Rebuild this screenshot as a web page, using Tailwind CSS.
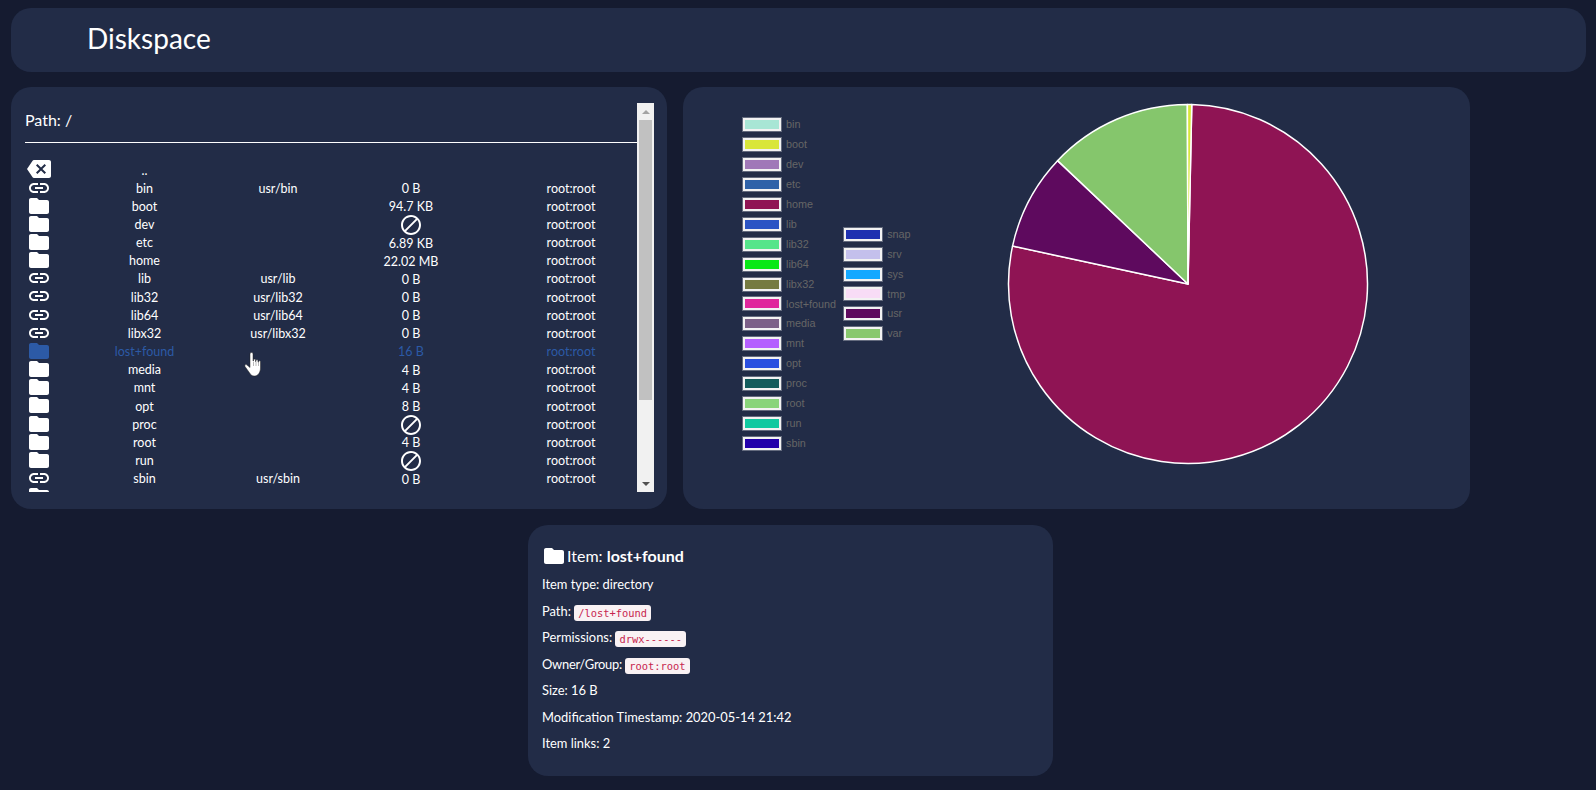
<!DOCTYPE html>
<html lang="en">
<head>
  <meta charset="UTF-8" />
  <title>Diskspace</title>
  <script src="https://cdn.jsdelivr.net/npm/@tailwindcss/browser@4"></script>
</head>
<body class="bg-[#151b30] text-white font-['Lato',sans-serif] overflow-hidden h-[790px]">
  <svg class="hidden">
    <symbol id="folder" viewBox="0 0 24 24"><path fill="currentColor" d="M10 4H4c-1.1 0-1.99.9-1.99 2L2 18c0 1.1.9 2 2 2h16c1.1 0 2-.9 2-2V8c0-1.1-.9-2-2-2h-8l-2-2z"/></symbol>
    <symbol id="link" viewBox="0 0 24 24"><path fill="currentColor" d="M3.9 12c0-1.71 1.39-3.1 3.1-3.1h4V7H7c-2.76 0-5 2.24-5 5s2.24 5 5 5h4v-1.9H7c-1.71 0-3.1-1.39-3.1-3.1zM8 13h8v-2H8v2zm9-6h-4v1.9h4c1.71 0 3.1 1.39 3.1 3.1s-1.39 3.1-3.1 3.1h-4V17h4c2.76 0 5-2.24 5-5s-2.24-5-5-5z"/></symbol>
    <symbol id="back" viewBox="0 0 24 24"><path fill="currentColor" d="M22 3H7c-.69 0-1.23.35-1.59.88L0 12l5.41 8.11c.36.53.9.89 1.59.89h15c1.1 0 2-.9 2-2V5c0-1.1-.9-2-2-2zm-3 12.59L17.59 17 14 13.41 10.41 17 9 15.59 12.59 12 9 8.41 10.41 7 14 10.59 17.59 7 19 8.41 15.41 12 19 15.59z"/></symbol>
    <symbol id="block" viewBox="0 0 24 24"><path fill="currentColor" d="M12 2C6.48 2 2 6.48 2 12s4.48 10 10 10 10-4.48 10-10S17.52 2 12 2zM4 12c0-4.42 3.58-8 8-8 1.85 0 3.55.63 4.9 1.69L5.69 16.9C4.63 15.55 4 13.85 4 12zm8 8c-1.85 0-3.55-.63-4.9-1.69L18.31 7.1C19.37 8.45 20 10.15 20 12c0 4.42-3.58 8-8 8z"/></symbol>
  </svg>

  <div class="pt-2 pl-[11px] pr-[10px]">
    <header class="h-16 rounded-[20px] bg-[#222c47] pl-[76px] pb-1 flex items-center">
      <h1 class="text-[28px] leading-none">Diskspace</h1>
    </header>

    <div class="mt-[15px] flex gap-4 items-start">
      <!-- file list -->
      <section class="relative w-[656px] h-[422px] rounded-[20px] bg-[#222c47] pt-4 pl-[14px] pr-[13px] flex">
        <div class="w-[612px] h-[389px] overflow-hidden">
          <div class="h-[40px] border-b border-white pb-[6px] flex items-center text-[16px]">Path: /</div>
          <div id="rows" class="pt-[18.5px] text-[12.5px]"></div>
        </div>
        <div class="w-[17px] h-[389px] bg-[#f1f1f1] flex flex-col items-center">
          <div class="h-[17px] flex items-center justify-center"><div class="w-0 h-0 border-x-[4px] border-x-transparent border-b-[4px] border-b-[#a3a3a3]"></div></div>
          <div class="w-[13px] h-[280px] bg-[#c1c1c1]"></div>
          <div class="mt-auto h-[17px] flex items-center justify-center"><div class="w-0 h-0 border-x-[4px] border-x-transparent border-t-[4px] border-t-[#505050]"></div></div>
        </div>
        <!-- mouse pointer -->
        <svg class="absolute left-[233px] top-[265px]" width="20" height="25" viewBox="0 0 20 25"><path fill="#fff" stroke="#222" stroke-width=".5" d="M7.500.5c1 0 1.500.7 1.500 1.700V9h.5V8c0-1.200 2-1.200 2 0v1.500h.5v-.8c0-1.200 2-1.200 2 0v1.500h.5v-.5c0-1.200 2-1.200 2 0V16c0 4-2.500 8-5.500 8H10c-2 0-3-1-4-2.500L1 14.500c-.8-1.500 1-2.500 2-1.500l3 2.500V2.200C6 1.200 6.500.5 7.500.5z"/><path stroke="#8a8a8a" stroke-width=".6" d="M9.500 10v4M12 10v4M14.500 10.500v3.500"/></svg>
      </section>

      <!-- chart -->
      <section class="w-[787px] h-[422px] rounded-[20px] bg-[#222c47] flex">
        <div class="ml-[60px] mt-[28px] h-[338px] flex items-center gap-[8px] text-[10.8px] leading-none text-[#666] font-['Liberation_Sans',sans-serif]">
          <ul id="legend1"></ul>
          <ul id="legend2"></ul>
        </div>
        <svg class="ml-auto mr-[94.5px] mt-[9px]" width="376" height="376" viewBox="-188 -188 376 376">
          <g stroke="#fff" stroke-width="1.5" stroke-linejoin="round">
            <path id="s-home" fill="#8f1454" d=""/>
            <path id="s-usr" fill="#5e0a5e" d=""/>
            <path id="s-var" fill="#85c66c" d=""/>
            <path id="s-boot" fill="#d9e639" d=""/>
          </g>
        </svg>
      </section>
    </div>

    <!-- item details -->
    <section class="mt-4 ml-[517px] w-[525px] h-[251px] rounded-[20px] bg-[#222c47] pt-[19px] pl-[14px] text-[12.9px] leading-[21px]">
      <h2 class="flex items-center text-[16px] h-6 leading-none">
        <svg class="w-6 h-6 mr-[1px]"><use href="#folder"/></svg>
        <span>Item: <b>lost+found</b></span>
      </h2>
      <p class="mt-[6px] h-[21px]">Item type: directory</p>
      <p class="mt-[5.5px] h-[21px]">Path: <code class="inline-block h-4 leading-4 align-[-1px] px-1 rounded-[3px] bg-[#f9f2f4] text-[#c7254e] text-[10.4px] font-['DejaVu_Sans_Mono',monospace]">/lost+found</code></p>
      <p class="mt-[5.5px] h-[21px]">Permissions: <code class="inline-block h-4 leading-4 align-[-1px] px-1 rounded-[3px] bg-[#f9f2f4] text-[#c7254e] text-[10.4px] font-['DejaVu_Sans_Mono',monospace]">drwx------</code></p>
      <p class="mt-[5.5px] h-[21px]"><span class="tracking-[-0.25px]">Owner/Group:</span> <code class="inline-block h-4 leading-4 align-[-1px] px-1 rounded-[3px] bg-[#f9f2f4] text-[#c7254e] text-[10.4px] font-['DejaVu_Sans_Mono',monospace]">root:root</code></p>
      <p class="mt-[5.7px] h-[21px]">Size: 16 B</p>
      <p class="mt-[5.5px] h-[21px]">Modification Timestamp: 2020-05-14 21:42</p>
      <p class="mt-[5.7px] h-[21px]">Item links: 2</p>
    </section>
  </div>

  <script>
    // name, link target, size, icon
    const items = [
      ["..", "", "", "back"],
      ["bin", "usr/bin", "0 B", "link"],
      ["boot", "", "94.7 KB", "folder"],
      ["dev", "", null, "folder"],
      ["etc", "", "6.89 KB", "folder"],
      ["home", "", "22.02 MB", "folder"],
      ["lib", "usr/lib", "0 B", "link"],
      ["lib32", "usr/lib32", "0 B", "link"],
      ["lib64", "usr/lib64", "0 B", "link"],
      ["libx32", "usr/libx32", "0 B", "link"],
      ["lost+found", "", "16 B", "folder"],
      ["media", "", "4 B", "folder"],
      ["mnt", "", "4 B", "folder"],
      ["opt", "", "8 B", "folder"],
      ["proc", "", null, "folder"],
      ["root", "", "4 B", "folder"],
      ["run", "", null, "folder"],
      ["sbin", "usr/sbin", "0 B", "link"],
      ["snap", "", "24 B", "folder"],
    ];

    document.getElementById("rows").innerHTML = items.map(([name, link, size, icon]) => {
      const active = name === "lost+found";
      const owner = name === ".." ? "" : "root:root";
      const sizeCell = size === null
        ? '<svg class="w-6 h-6 mx-auto -my-[3px]"><use href="#block"/></svg>'
        : size;
      return `<div class="grid grid-cols-[25px_189px_78px_188px_132px] h-[18.16px] items-center text-center ${active ? "text-[#2c5aa6]" : ""}">
        <div class="h-[18px] ml-[2px] -mt-[3px] flex items-center"><svg class="w-6 h-6 shrink-0"><use href="#${icon}"/></svg></div>
        <div>${name}</div><div>${link}</div><div class="h-[18px] leading-[18px]">${sizeCell}</div><div>${owner}</div>
      </div>`;
    }).join("");

    const legend = [
      ["bin", "#a8e6d5"], ["boot", "#d9e639"], ["dev", "#a078b8"], ["etc", "#2f62a8"], ["home", "#8f1454"],
      ["lib", "#2b54c4"], ["lib32", "#55e58a"], ["lib64", "#08e816"], ["libx32", "#757a40"], ["lost+found", "#e0269c"],
      ["media", "#7c6088"], ["mnt", "#b45fff"], ["opt", "#2a4fe0"], ["proc", "#135c5c"], ["root", "#88d47a"],
      ["run", "#10c9a0"], ["sbin", "#2200aa"], ["snap", "#1e30b0"], ["srv", "#c4c0ec"], ["sys", "#14a8ff"],
      ["tmp", "#f8dcf6"], ["usr", "#5e0a5e"], ["var", "#88c86e"],
    ];
    const legendRow = ([name, color]) => `<li class="h-[19.9px] flex items-center gap-[5px]">
      <span class="w-[38px] h-[13px] border-2 border-[#f2f2f2] ring-1 ring-white/30" style="background:${color}"></span><span>${name}</span></li>`;
    document.getElementById("legend1").innerHTML = legend.slice(0, 17).map(legendRow).join("");
    document.getElementById("legend2").innerHTML = legend.slice(17).map(legendRow).join("");

    // pie slices, degrees clockwise from north
    const R = 179.5;
    function slice(from, to) {
      const pt = a => [R * Math.sin(a * Math.PI / 180), -R * Math.cos(a * Math.PI / 180)];
      const [x1, y1] = pt(from), [x2, y2] = pt(to);
      return `M0 0L${x1} ${y1}A${R} ${R} 0 ${to - from > 180 ? 1 : 0} 1 ${x2} ${y2}Z`;
    }
    document.getElementById("s-home").setAttribute("d", slice(1.2, 282.2));
    document.getElementById("s-usr").setAttribute("d", slice(282.2, 313.4));
    document.getElementById("s-var").setAttribute("d", slice(313.4, 359.8));
    document.getElementById("s-boot").setAttribute("d", slice(359.8, 361.2));
  </script>
</body>
</html>
